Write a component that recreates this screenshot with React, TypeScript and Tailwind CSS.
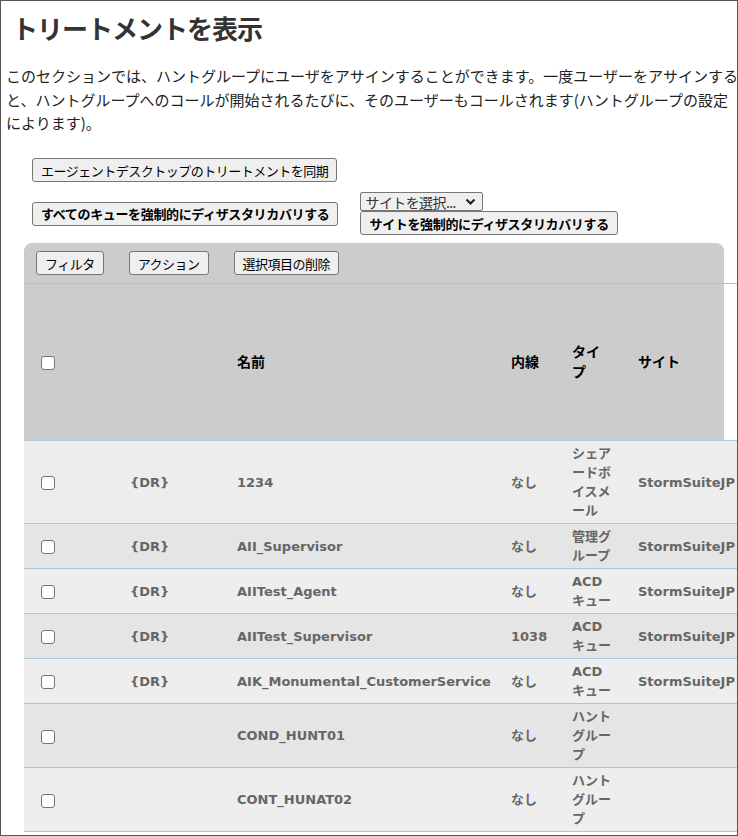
import React from "react";

type Row = {
  dr: boolean;
  name: string;
  ext: string;
  type: string[];
  site: string;
  bg: string;
};

const rows: Row[] = [
  { dr: true, name: "1234", ext: "なし", type: ["シェア", "ードボ", "イスメ", "ール"], site: "StormSuiteJP", bg: "bg-[#ededed]" },
  { dr: true, name: "AII_Supervisor", ext: "なし", type: ["管理グ", "ループ"], site: "StormSuiteJP", bg: "bg-[#e5e5e5]" },
  { dr: true, name: "AIITest_Agent", ext: "なし", type: ["ACD", "キュー"], site: "StormSuiteJP", bg: "bg-[#eeeeee]" },
  { dr: true, name: "AIITest_Supervisor", ext: "1038", type: ["ACD", "キュー"], site: "StormSuiteJP", bg: "bg-[#e5e5e5]" },
  { dr: true, name: "AIK_Monumental_CustomerService", ext: "なし", type: ["ACD", "キュー"], site: "StormSuiteJP", bg: "bg-[#eeeeee]" },
  { dr: false, name: "COND_HUNT01", ext: "なし", type: ["ハント", "グルー", "プ"], site: "", bg: "bg-[#e5e5e5]" },
  { dr: false, name: "CONT_HUNAT02", ext: "なし", type: ["ハント", "グルー", "プ"], site: "", bg: "bg-[#eeeeee]" },
];

function Box() {
  return <span className="inline-block w-[14px] h-[14px] border border-[#767676] rounded-[3px] bg-white align-middle" />;
}

function Btn({ children, bold }: { children: React.ReactNode; bold?: boolean }) {
  return (
    <button
      className={
        "h-[24px] px-[8px] bg-[#efefef] border border-[#767676] rounded-[3px] text-[13px] leading-none text-black whitespace-nowrap " +
        (bold ? "font-bold tracking-[-0.35px]" : "font-normal tracking-[-0.5px]")
      }
    >
      {children}
    </button>
  );
}

export default function App() {
  return (
    <div className="w-[738px] h-[836px] border border-[#555555] overflow-hidden bg-white font-['Noto_Sans_CJK_JP',sans-serif] text-[#222222]">
      <h1 className="pt-[10px] pl-[11px] text-[26px] leading-[34px] tracking-[-1px] font-bold text-[#333333]">
        トリートメントを表示
      </h1>
      <p className="mt-[19px] pl-[5px] text-[15px] leading-[23.5px] whitespace-nowrap">
        このセクションでは、ハントグループにユーザをアサインすることができます。一度ユーザーをアサインする
        <br />
        と、ハントグループへのコールが開始されるたびに、そのユーザーもコールされます(ハントグループの設定
        <br />
        によります)。
      </p>

      <div className="mt-[22px] pl-[31px]">
        <Btn>エージェントデスクトップのトリートメントを同期</Btn>
      </div>

      <div className="mt-[10px] pl-[31px] flex items-center gap-[22px]">
        <Btn bold>すべてのキューを強制的にディザスタリカバリする</Btn>
        <div className="flex flex-col items-start">
          <div className="w-[123px] h-[19px] border border-[#767676] rounded-[2px] bg-[#efefef] flex items-center pl-[4px] pr-[6px] text-[14px] tracking-[-0.6px] leading-none text-[#333]">
            <span className="flex-1">サイトを選択...</span>
            <svg width="11" height="8" viewBox="0 0 11 8">
              <path d="M1.5 1.5 L5.5 5.5 L9.5 1.5" stroke="#222" strokeWidth="2.2" fill="none" />
            </svg>
          </div>
          <Btn bold>サイトを強制的にディザスタリカバリする</Btn>
        </div>
      </div>

      <div className="mt-[8px] ml-[23px] w-[700px] bg-[#cccccc] rounded-t-[8px]">
        <div className="h-[40px] flex items-center gap-[25px] pl-[12px]">
          <Btn>フィルタ</Btn>
          <Btn>アクション</Btn>
          <Btn>選択項目の削除</Btn>
        </div>
        <table className="w-[714px] table-fixed border-collapse font-['DejaVu_Sans','Noto_Sans_CJK_JP',sans-serif]">
          <colgroup>
            <col className="w-[95px]" />
            <col className="w-[107px]" />
            <col className="w-[274px]" />
            <col className="w-[61px]" />
            <col className="w-[66px]" />
            <col className="w-[111px]" />
          </colgroup>
          <thead>
            <tr className="h-[157px] border-t border-b border-[#a6c8dc] text-left text-black font-['Noto_Sans_CJK_JP',sans-serif] text-[14px] font-bold leading-[20px]">
              <th className="pl-[17px] pb-[3px] align-middle"><Box /></th>
              <th className="pl-[11px]"></th>
              <th className="pl-[11px] pb-[3px] font-bold">名前</th>
              <th className="pl-[11px] pb-[3px] font-bold">内線</th>
              <th className="pl-[11px] pb-[3px] font-bold">タイ<br />プ</th>
              <th className="pl-[11px] pb-[3px] font-bold">サイト</th>
            </tr>
          </thead>
          <tbody>
            {rows.map((r, i) => (
              <tr key={i} className={r.bg + " border-b border-[#a6c8dc] text-[13px] font-bold text-[#666666] leading-[19px]"}>
                <td className="pl-[17px] py-[3px] align-middle"><Box /></td>
                <td className="pl-[11px] py-[3px] whitespace-nowrap">{r.dr ? "{DR}" : ""}</td>
                <td className="pl-[11px] py-[3px] whitespace-nowrap">{r.name}</td>
                <td className="pl-[11px] py-[3px] whitespace-nowrap">{r.ext}</td>
                <td className="pl-[11px] py-[3px] whitespace-nowrap">
                  {r.type.map((t, j) => (
                    <div key={j}>{t}</div>
                  ))}
                </td>
                <td className="pl-[11px] py-[3px] whitespace-nowrap">{r.site}</td>
              </tr>
            ))}
          </tbody>
        </table>
      </div>
    </div>
  );
}
